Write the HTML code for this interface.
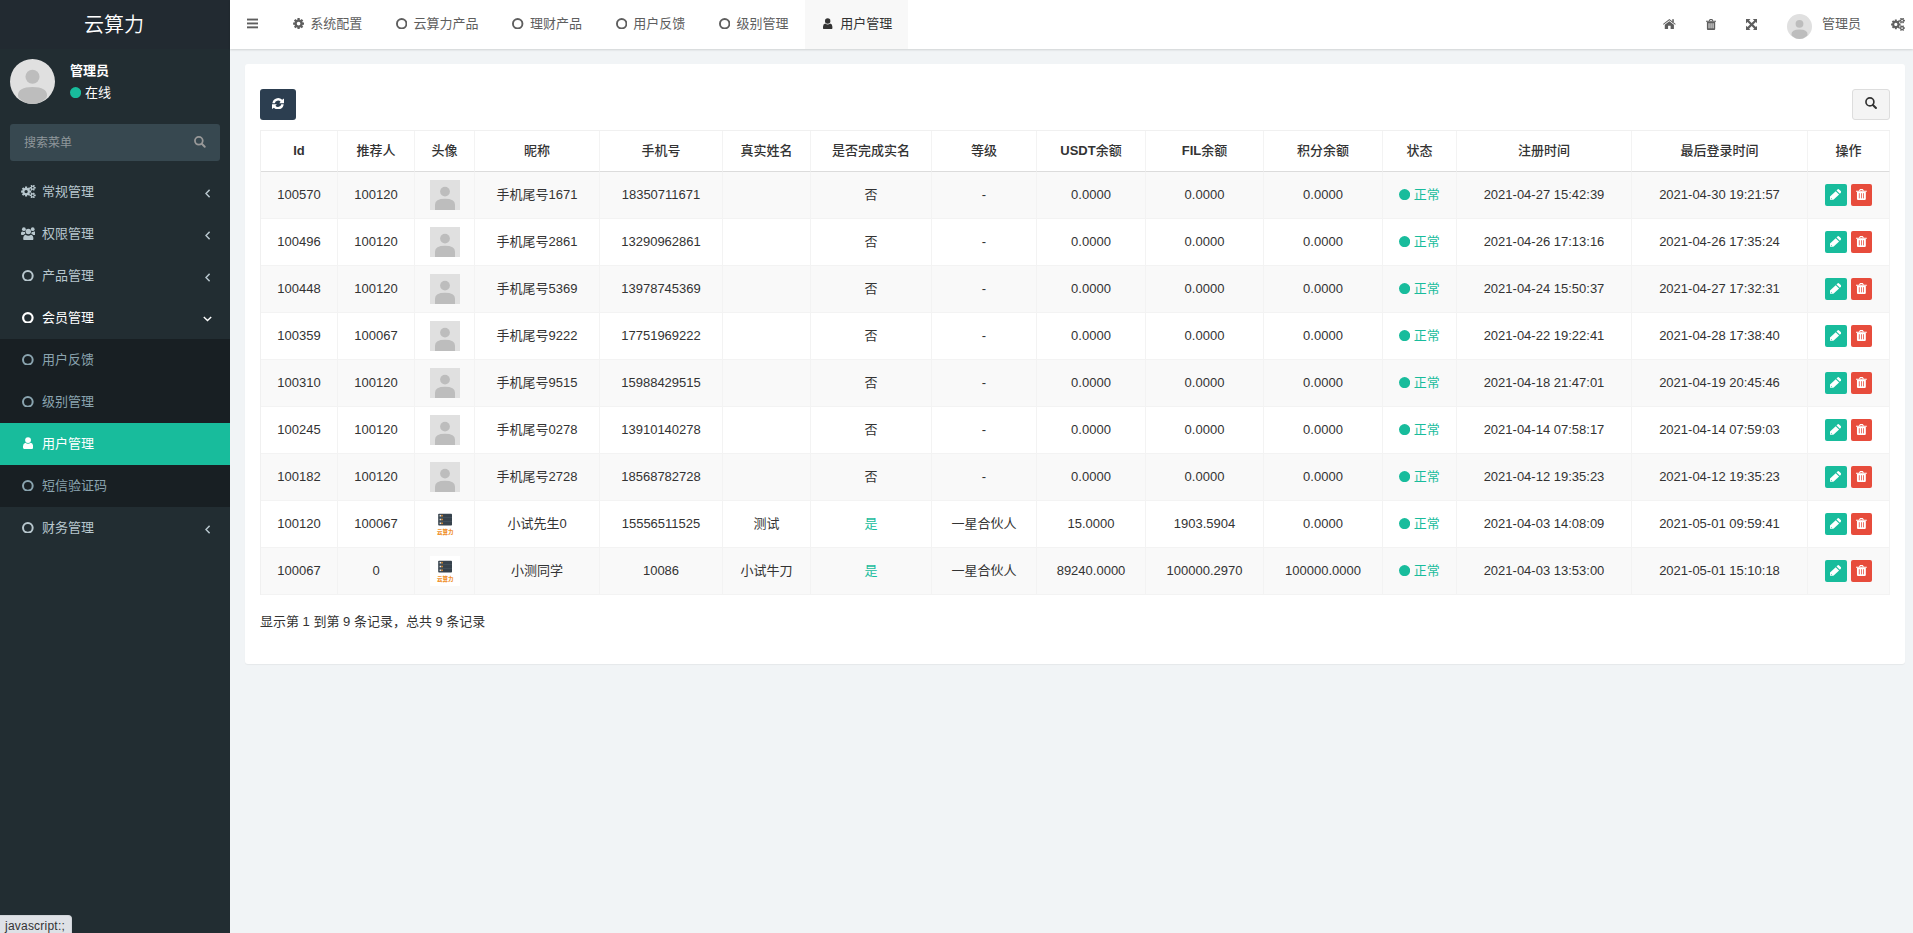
<!DOCTYPE html>
<html lang="zh-CN"><head><meta charset="utf-8"><title>云算力</title>
<style>
*{box-sizing:border-box}
html,body{margin:0;padding:0}
body{width:1913px;height:933px;overflow:hidden;position:relative;background:#f1f4f6;
 font-family:"Liberation Sans","Noto Sans CJK SC",sans-serif;font-size:13px;color:#333;line-height:1.42857}
svg{vertical-align:top}
.abs{position:absolute;display:block}
a{display:block;text-decoration:none}
button{margin:0;padding:0;border:0;font:inherit;display:block}
.mi .i,.mi .t,.tab .i,.tab .t{display:block}
/* sidebar */
#side{position:absolute;left:0;top:0;width:230px;height:933px;background:#222d32}
#logo{position:absolute;left:0;top:0;width:230px;height:49px;background:#222a31;color:#fff;text-align:center;
 font-size:20px;line-height:51px;font-weight:350;text-indent:-1.8px;overflow:hidden;font-family:"Liberation Sans","Noto Sans CJK SC",sans-serif}
#uname{position:absolute;left:70px;top:60.5px;color:#fff;font-weight:bold;font-size:13px;line-height:20px;white-space:nowrap}
#ustat{position:absolute;left:85px;top:82.7px;color:#fff;font-size:13px;line-height:20px;white-space:nowrap}
#sform{position:absolute;left:10px;top:124px;width:210px;height:37px;background:#374850;border-radius:3px}
#sform span{position:absolute;left:14px;top:10px;font-size:12px;line-height:18px;color:#8f979b}
.mi{position:absolute;left:0;width:230px;height:42px;color:#b8c7ce;font-size:13px}
.mi .t{position:absolute;left:42px;top:11px;line-height:20px;white-space:nowrap}
.mi .i{position:absolute}
.mi.sub{color:#8aa4af}
.mi.act{background:#18bc9c;color:#fff}
.mi.open{color:#fff}
#submenu{position:absolute;left:0;top:338.8px;width:230px;height:168px;background:#181f23}
/* header */
#hdr{position:absolute;left:230px;top:0;width:1683px;height:49px;background:#fff;box-shadow:0 1px 2px rgba(0,0,0,.14)}
.tab{position:absolute;top:0;height:49px;color:#555;font-size:13px;line-height:20px;white-space:nowrap}
.tab .t{position:absolute;top:13.5px}
.tab .i{position:absolute}
/* panel */
#panel{position:absolute;left:245px;top:64px;width:1660px;height:600px;background:#fff;border-radius:3px;box-shadow:0 1px 1px rgba(0,0,0,.05)}
#btnr{position:absolute;left:260px;top:89px;width:36px;height:31px;background:#2c3e50;border-radius:3px}
#btns{position:absolute;left:1852px;top:89px;width:38px;height:31px;background:#f4f4f4;border:1px solid #ddd;border-radius:3px}
table{position:absolute;left:260px;top:130px;width:1630px;border-collapse:separate;border-spacing:0;table-layout:fixed;
 border-top:1px solid #f0f0f0;border-left:1px solid #f0f0f0}
th,td{padding:0;text-align:center;vertical-align:middle;border-right:1px solid #f3f3f3;border-bottom:1px solid #f3f3f3;white-space:nowrap;overflow:hidden;font-size:13px}
th{height:41px;border-bottom:1px solid #dcdcdc;font-weight:500;color:#333}
th b{font-weight:700}
td{height:47px;color:#333}
tr.odd td{background:#f9f9f9}
td .av{display:inline-block;width:30px;height:30px;vertical-align:middle}
.yes{color:#18bc9c}
.st{color:#18bc9c}
.st svg{vertical-align:-1px;margin-right:3.3px}
a.bx{display:inline-block;height:22px;border-radius:2px;vertical-align:middle;position:relative}
.bx svg{position:absolute}
#foot{position:absolute;left:260px;top:611.6px;line-height:20px;font-size:13px;color:#333;white-space:nowrap}
#sbar{position:absolute;left:0;top:915px;width:72px;height:18px;background:#dee1e6;border-top-right-radius:4px;
 font-size:12px;line-height:20px;color:#333;padding-left:5px;border-top:1px solid #d0d4d9;border-right:1px solid #d0d4d9;letter-spacing:.22px;white-space:nowrap}
</style></head>
<body>
<aside id="side">
<a id="logo">云算力</a>
<span class="abs" style="left:10px;top:59px;"><svg width="45" height="45" viewBox="0 0 30 30" preserveAspectRatio="none" style="display:block"><circle cx="15" cy="15" r="15" fill="#e0e0e0"/><circle cx="15" cy="11.8" r="4.7" fill="#bdbdbd"/><path fill="#bdbdbd" d="M5.3 24.3 Q5.3 18.6 15 18.6 Q24.7 18.6 24.7 24.3 Q24.7 26 23 27 Q19.5 30 15 30 Q10.5 30 7 27 Q5.3 26 5.3 24.3 Z"/></svg></span>
<div id="uname">管理员</div>
<span class="abs" style="left:70px;top:87px;"><svg width="11.2" height="11.2" viewBox="0 0 11.2 11.2" preserveAspectRatio="none"><circle cx="5.6" cy="5.6" r="5.6" fill="#18bc9c"/></svg></span><div id="ustat">在线</div>
<div id="sform"><span>搜索菜单</span><span class="abs" style="left:184.4px;top:12.2px;"><svg width="11.8" height="11.8" viewBox="0 0 100 100" preserveAspectRatio="none"><circle cx="41" cy="41" r="33" fill="none" stroke="#999" stroke-width="15"/><path d="M66 66 L91 91" stroke="#999" stroke-width="16" stroke-linecap="round"/></svg></span></div>
<div id="submenu"></div>
<nav>
<a class="mi " style="top:170.8px"><span class="i" style="left:20.6px;top:14.1px"><svg width="15" height="13.2" viewBox="0 0 150 132" preserveAspectRatio="none"><path fill-rule="evenodd" fill="#b8c7ce" d="M88.62 55.71 L100.94 55.66 L100.94 76.34 L88.62 76.29 L84.88 85.32 L93.63 94.00 L79.00 108.63 L70.32 99.88 L61.29 103.62 L61.34 115.94 L40.66 115.94 L40.71 103.62 L31.68 99.88 L23.00 108.63 L8.37 94.00 L17.12 85.32 L13.38 76.29 L1.06 76.34 L1.06 55.66 L13.38 55.71 L17.12 46.68 L8.37 38.00 L23.00 23.37 L31.68 32.12 L40.71 28.38 L40.66 16.06 L61.34 16.06 L61.29 28.38 L70.32 32.12 L79.00 23.37 L93.63 38.00 L84.88 46.68 Z M34.00 66.00 a17.00 17.00 0 1 0 34.00 0 a17.00 17.00 0 1 0 -34.00 0 Z M136.76 19.89 L146.94 18.98 L146.94 35.02 L136.76 34.11 L133.04 40.55 L138.92 48.92 L125.02 56.94 L120.72 47.67 L113.28 47.67 L108.98 56.94 L95.08 48.92 L100.96 40.55 L97.24 34.11 L87.06 35.02 L87.06 18.98 L97.24 19.89 L100.96 13.45 L95.08 5.08 L108.98 -2.94 L113.28 6.33 L120.72 6.33 L125.02 -2.94 L138.92 5.08 L133.04 13.45 Z M108.00 27.00 a9.00 9.00 0 1 0 18.00 0 a9.00 9.00 0 1 0 -18.00 0 Z M136.76 96.89 L146.94 95.98 L146.94 112.02 L136.76 111.11 L133.04 117.55 L138.92 125.92 L125.02 133.94 L120.72 124.67 L113.28 124.67 L108.98 133.94 L95.08 125.92 L100.96 117.55 L97.24 111.11 L87.06 112.02 L87.06 95.98 L97.24 96.89 L100.96 90.45 L95.08 82.08 L108.98 74.06 L113.28 83.33 L120.72 83.33 L125.02 74.06 L138.92 82.08 L133.04 90.45 Z M108.00 104.00 a9.00 9.00 0 1 0 18.00 0 a9.00 9.00 0 1 0 -18.00 0 Z"/></svg></span><span class="t">常规管理</span><span class="i" style="left:204.9px;top:18.2px"><svg width="5.5" height="9" viewBox="0 0 55 90" preserveAspectRatio="none"><path d="M46 8 L10 45 L46 82" fill="none" stroke="#b8c7ce" stroke-width="14"/></svg></span></a>
<a class="mi " style="top:212.8px"><span class="i" style="left:20.6px;top:14.0px"><svg width="14.6" height="13.2" viewBox="0 0 146 132" preserveAspectRatio="none"><circle cx="73" cy="45" r="27" fill="#b8c7ce"/><path fill="#b8c7ce" d="M34 132 Q22 132 22 118 Q22 84 46 78 Q58 88 73 88 Q88 88 100 78 Q124 84 124 118 Q124 132 112 132 Z"/><circle cx="29" cy="22" r="19" fill="#b8c7ce"/><path fill="#b8c7ce" d="M0 62 Q0 44 14 44 Q26 52 40 47 Q38 60 44 70 Q30 72 24 80 L8 80 Q0 80 0 70 Z"/><circle cx="117" cy="22" r="19" fill="#b8c7ce"/><path fill="#b8c7ce" d="M146 62 Q146 44 132 44 Q120 52 106 47 Q108 60 102 70 Q116 72 122 80 L138 80 Q146 80 146 70 Z"/></svg></span><span class="t">权限管理</span><span class="i" style="left:204.9px;top:18.2px"><svg width="5.5" height="9" viewBox="0 0 55 90" preserveAspectRatio="none"><path d="M46 8 L10 45 L46 82" fill="none" stroke="#b8c7ce" stroke-width="14"/></svg></span></a>
<a class="mi " style="top:254.8px"><span class="i" style="left:22.3px;top:14.8px"><svg width="11.7" height="11.7" viewBox="0 0 11.7 11.7" preserveAspectRatio="none"><circle cx="5.85" cy="5.85" r="4.85" fill="none" stroke="#b8c7ce" stroke-width="2.0"/></svg></span><span class="t">产品管理</span><span class="i" style="left:204.9px;top:18.2px"><svg width="5.5" height="9" viewBox="0 0 55 90" preserveAspectRatio="none"><path d="M46 8 L10 45 L46 82" fill="none" stroke="#b8c7ce" stroke-width="14"/></svg></span></a>
<a class="mi open" style="top:296.8px"><span class="i" style="left:22.3px;top:14.8px"><svg width="11.7" height="11.7" viewBox="0 0 11.7 11.7" preserveAspectRatio="none"><circle cx="5.85" cy="5.85" r="4.75" fill="none" stroke="#fff" stroke-width="2.2"/></svg></span><span class="t">会员管理</span><span class="i" style="left:203.4px;top:19.7px"><svg width="9" height="5.5" viewBox="0 0 90 55" preserveAspectRatio="none"><path d="M8 9 L45 45 L82 9" fill="none" stroke="#fff" stroke-width="14"/></svg></span></a>
<a class="mi sub" style="top:338.8px"><span class="i" style="left:22.3px;top:14.8px"><svg width="11.7" height="11.7" viewBox="0 0 11.7 11.7" preserveAspectRatio="none"><circle cx="5.85" cy="5.85" r="4.85" fill="none" stroke="#8aa4af" stroke-width="2.0"/></svg></span><span class="t">用户反馈</span></a>
<a class="mi sub" style="top:380.8px"><span class="i" style="left:22.3px;top:14.8px"><svg width="11.7" height="11.7" viewBox="0 0 11.7 11.7" preserveAspectRatio="none"><circle cx="5.85" cy="5.85" r="4.85" fill="none" stroke="#8aa4af" stroke-width="2.0"/></svg></span><span class="t">级别管理</span></a>
<a class="mi sub act" style="top:422.8px"><span class="i" style="left:23.0px;top:14.5px"><svg width="10.1" height="11.9" viewBox="0 0 100 118" preserveAspectRatio="none"><circle cx="50" cy="31" r="29" fill="#fff"/><path fill="#fff" d="M12 118 Q0 118 0 104 L0 92 Q0 62 24 57 Q36 68 50 68 Q64 68 76 57 Q100 62 100 92 L100 104 Q100 118 88 118 Z"/></svg></span><span class="t">用户管理</span></a>
<a class="mi sub" style="top:464.8px"><span class="i" style="left:22.3px;top:14.8px"><svg width="11.7" height="11.7" viewBox="0 0 11.7 11.7" preserveAspectRatio="none"><circle cx="5.85" cy="5.85" r="4.85" fill="none" stroke="#8aa4af" stroke-width="2.0"/></svg></span><span class="t">短信验证码</span></a>
<a class="mi " style="top:506.8px"><span class="i" style="left:22.3px;top:14.8px"><svg width="11.7" height="11.7" viewBox="0 0 11.7 11.7" preserveAspectRatio="none"><circle cx="5.85" cy="5.85" r="4.85" fill="none" stroke="#b8c7ce" stroke-width="2.0"/></svg></span><span class="t">财务管理</span><span class="i" style="left:204.9px;top:18.2px"><svg width="5.5" height="9" viewBox="0 0 55 90" preserveAspectRatio="none"><path d="M46 8 L10 45 L46 82" fill="none" stroke="#b8c7ce" stroke-width="14"/></svg></span></a>
</nav>
</aside>
<header id="hdr">
<span class="abs" style="left:16.9px;top:18.2px;"><svg width="11" height="11" viewBox="0 0 11 11" preserveAspectRatio="none"><rect x="0" y="0.6" width="11" height="1.9" fill="#5e5e5e"/><rect x="0" y="4.5" width="11" height="1.9" fill="#5e5e5e"/><rect x="0" y="8.4" width="11" height="1.9" fill="#5e5e5e"/></svg></span>
<a class="tab" style="left:45px;width:102.5px;color:#5e5e5e"><span class="i" style="left:17.8px;top:17.8px"><svg width="11.2" height="11.2" viewBox="0 0 100 100" preserveAspectRatio="none"><path fill-rule="evenodd" fill="#5e5e5e" d="M86.65 39.97 L98.96 39.86 L98.96 60.14 L86.65 60.03 L83.01 68.83 L91.79 77.45 L77.45 91.79 L68.83 83.01 L60.03 86.65 L60.14 98.96 L39.86 98.96 L39.97 86.65 L31.17 83.01 L22.55 91.79 L8.21 77.45 L16.99 68.83 L13.35 60.03 L1.04 60.14 L1.04 39.86 L13.35 39.97 L16.99 31.17 L8.21 22.55 L22.55 8.21 L31.17 16.99 L39.97 13.35 L39.86 1.04 L60.14 1.04 L60.03 13.35 L68.83 16.99 L77.45 8.21 L91.79 22.55 L83.01 31.17 Z M33.50 50.00 a16.50 16.50 0 1 0 33.00 0 a16.50 16.50 0 1 0 -33.00 0 Z"/></svg></span><span class="t" style="left:35.3px">系统配置</span></a>
<a class="tab" style="left:148.2px;width:115.5px;color:#5e5e5e"><span class="i" style="left:17.6px;top:17.8px"><svg width="11.4" height="11.4" viewBox="0 0 11.4 11.4" preserveAspectRatio="none"><circle cx="5.7" cy="5.7" r="4.75" fill="none" stroke="#5e5e5e" stroke-width="1.9"/></svg></span><span class="t" style="left:35.3px">云算力产品</span></a>
<a class="tab" style="left:264.6px;width:103px;color:#5e5e5e"><span class="i" style="left:17.6px;top:17.8px"><svg width="11.4" height="11.4" viewBox="0 0 11.4 11.4" preserveAspectRatio="none"><circle cx="5.7" cy="5.7" r="4.75" fill="none" stroke="#5e5e5e" stroke-width="1.9"/></svg></span><span class="t" style="left:35.3px">理财产品</span></a>
<a class="tab" style="left:368px;width:103px;color:#5e5e5e"><span class="i" style="left:17.6px;top:17.8px"><svg width="11.4" height="11.4" viewBox="0 0 11.4 11.4" preserveAspectRatio="none"><circle cx="5.7" cy="5.7" r="4.75" fill="none" stroke="#5e5e5e" stroke-width="1.9"/></svg></span><span class="t" style="left:35.3px">用户反馈</span></a>
<a class="tab" style="left:471.3px;width:103px;color:#5e5e5e"><span class="i" style="left:17.6px;top:17.8px"><svg width="11.4" height="11.4" viewBox="0 0 11.4 11.4" preserveAspectRatio="none"><circle cx="5.7" cy="5.7" r="4.75" fill="none" stroke="#5e5e5e" stroke-width="1.9"/></svg></span><span class="t" style="left:35.3px">级别管理</span></a>
<a class="tab" style="left:575px;width:103px;background:#f8f8f8;color:#333"><span class="i" style="left:18.4px;top:17.8px"><svg width="9.4" height="11.3" viewBox="0 0 100 118" preserveAspectRatio="none"><circle cx="50" cy="31" r="29" fill="#333"/><path fill="#333" d="M12 118 Q0 118 0 104 L0 92 Q0 62 24 57 Q36 68 50 68 Q64 68 76 57 Q100 62 100 92 L100 104 Q100 118 88 118 Z"/></svg></span><span class="t" style="left:35.3px">用户管理</span></a>
<span class="abs" style="left:1433px;top:18.9px;"><svg width="12.7" height="10.1" viewBox="0 0 100 100" preserveAspectRatio="none"><path fill="#5e5e5e" d="M50 0 L100 50 L96 56 L50 12 L4 56 L0 50 Z"/><path fill="#5e5e5e" d="M50 22 L86 57 L86 96 Q86 100 82 100 L60 100 L60 68 L40 68 L40 100 L18 100 Q14 100 14 96 L14 57 Z"/><rect x="73" y="2" width="12" height="30" fill="#5e5e5e"/></svg></span>
<span class="abs" style="left:1475.9px;top:18.9px;"><svg width="10.1" height="11.1" viewBox="0 0 100 100" preserveAspectRatio="none"><path fill="#5e5e5e" d="M0 16 L28 16 L35 3 Q36 0 40 0 L60 0 Q64 0 65 3 L72 16 L100 16 L100 25 L0 25 Z"/><path fill="#5e5e5e" d="M9 25 L91 25 L91 88 Q91 100 79 100 L21 100 Q9 100 9 88 Z"/><rect x="25.5" y="38" width="9" height="46" fill="#fff"/><rect x="45.5" y="38" width="9" height="46" fill="#fff"/><rect x="65.5" y="38" width="9" height="46" fill="#fff"/><path fill="#fff" d="M38 16 L42 8 L58 8 L62 16 Z"/></svg></span>
<span class="abs" style="left:1515.9px;top:18.9px;"><svg width="11.3" height="11.1" viewBox="0 0 100 100" preserveAspectRatio="none"><path fill="#5e5e5e" d="M0 0 L40 0 L27 13 L50 36 L73 13 L60 0 L100 0 L100 40 L87 27 L64 50 L87 73 L100 60 L100 100 L60 100 L73 87 L50 64 L27 87 L40 100 L0 100 L0 60 L13 73 L36 50 L13 27 L0 40 Z"/></svg></span>
<span class="abs" style="left:1557px;top:14px;"><svg width="25" height="25" viewBox="0 0 30 30" preserveAspectRatio="none" style="display:block"><circle cx="15" cy="15" r="15" fill="#e0e0e0"/><circle cx="15" cy="11.8" r="4.7" fill="#bdbdbd"/><path fill="#bdbdbd" d="M5.3 24.3 Q5.3 18.6 15 18.6 Q24.7 18.6 24.7 24.3 Q24.7 26 23 27 Q19.5 30 15 30 Q10.5 30 7 27 Q5.3 26 5.3 24.3 Z"/></svg></span>
<div class="abs" style="left:1592px;top:14px;color:#5e5e5e;line-height:20px;white-space:nowrap">管理员</div>
<span class="abs" style="left:1661.4px;top:17.9px;"><svg width="14.2" height="12.8" viewBox="0 0 150 132" preserveAspectRatio="none"><path fill-rule="evenodd" fill="#5e5e5e" d="M88.62 55.71 L100.94 55.66 L100.94 76.34 L88.62 76.29 L84.88 85.32 L93.63 94.00 L79.00 108.63 L70.32 99.88 L61.29 103.62 L61.34 115.94 L40.66 115.94 L40.71 103.62 L31.68 99.88 L23.00 108.63 L8.37 94.00 L17.12 85.32 L13.38 76.29 L1.06 76.34 L1.06 55.66 L13.38 55.71 L17.12 46.68 L8.37 38.00 L23.00 23.37 L31.68 32.12 L40.71 28.38 L40.66 16.06 L61.34 16.06 L61.29 28.38 L70.32 32.12 L79.00 23.37 L93.63 38.00 L84.88 46.68 Z M34.00 66.00 a17.00 17.00 0 1 0 34.00 0 a17.00 17.00 0 1 0 -34.00 0 Z M136.76 19.89 L146.94 18.98 L146.94 35.02 L136.76 34.11 L133.04 40.55 L138.92 48.92 L125.02 56.94 L120.72 47.67 L113.28 47.67 L108.98 56.94 L95.08 48.92 L100.96 40.55 L97.24 34.11 L87.06 35.02 L87.06 18.98 L97.24 19.89 L100.96 13.45 L95.08 5.08 L108.98 -2.94 L113.28 6.33 L120.72 6.33 L125.02 -2.94 L138.92 5.08 L133.04 13.45 Z M108.00 27.00 a9.00 9.00 0 1 0 18.00 0 a9.00 9.00 0 1 0 -18.00 0 Z M136.76 96.89 L146.94 95.98 L146.94 112.02 L136.76 111.11 L133.04 117.55 L138.92 125.92 L125.02 133.94 L120.72 124.67 L113.28 124.67 L108.98 133.94 L95.08 125.92 L100.96 117.55 L97.24 111.11 L87.06 112.02 L87.06 95.98 L97.24 96.89 L100.96 90.45 L95.08 82.08 L108.98 74.06 L113.28 83.33 L120.72 83.33 L125.02 74.06 L138.92 82.08 L133.04 90.45 Z M108.00 104.00 a9.00 9.00 0 1 0 18.00 0 a9.00 9.00 0 1 0 -18.00 0 Z"/></svg></span>
</header>
<main>
<div id="panel"></div>
<button id="btnr" type="button"><span class="abs" style="left:12.1px;top:8.7px;"><svg width="12.1" height="11.5" viewBox="0 0 100 95" preserveAspectRatio="none"><path fill="#fff" d="M3.3 43 A47 47 0 0 1 84 15 L100 4 L100 43 L60 43 L71 32 A27 27 0 0 0 23.5 43 Z"/><path fill="#fff" d="M3.3 43 A47 47 0 0 1 84 15 L100 4 L100 43 L60 43 L71 32 A27 27 0 0 0 23.5 43 Z" transform="rotate(180 50 47.5)"/></svg></span></button>
<button id="btns" type="button"><span class="abs" style="left:12.3px;top:7.3px;"><svg width="12" height="12" viewBox="0 0 100 100" preserveAspectRatio="none"><circle cx="41" cy="41" r="33" fill="none" stroke="#333" stroke-width="14"/><path d="M66 66 L91 91" stroke="#333" stroke-width="17" stroke-linecap="round"/></svg></span></button>
<table><colgroup><col style="width:77px"><col style="width:77px"><col style="width:60px"><col style="width:125px"><col style="width:123px"><col style="width:88px"><col style="width:121px"><col style="width:105px"><col style="width:109px"><col style="width:118px"><col style="width:119px"><col style="width:74px"><col style="width:175px"><col style="width:176px"><col style="width:82px"></colgroup>
<thead><tr><th><b>Id</b></th><th>推荐人</th><th>头像</th><th>昵称</th><th>手机号</th><th>真实姓名</th><th>是否完成实名</th><th>等级</th><th><b>USDT</b>余额</th><th><b>FIL</b>余额</th><th>积分余额</th><th>状态</th><th>注册时间</th><th>最后登录时间</th><th>操作</th></tr></thead>
<tbody>
<tr class="odd"><td>100570</td><td>100120</td><td><span class="av"><svg width="30" height="30" viewBox="0 0 30 30" preserveAspectRatio="none" style="display:block;"><rect width="30" height="30" fill="#e0e0e0"/><circle cx="15" cy="11.6" r="4.9" fill="#bdbdbd"/><path fill="#bdbdbd" d="M5 30 L5 24.6 Q5 18.8 15 18.8 Q25 18.8 25 24.6 L25 30 Z"/></svg></span></td><td>手机尾号1671</td><td>18350711671</td><td></td><td>否</td><td>-</td><td>0.0000</td><td>0.0000</td><td>0.0000</td><td><span class="st"><svg width="11.2" height="11.2" viewBox="0 0 11.2 11.2" preserveAspectRatio="none"><circle cx="5.6" cy="5.6" r="5.6" fill="#18bc9c"/></svg>正常</span></td><td>2021-04-27 15:42:39</td><td>2021-04-30 19:21:57</td><td><a class="bx" style="width:22px;background:#18bc9c"><span class="abs" style="left:5.1px;top:5.4px;"><svg width="11.4" height="10.8" viewBox="0 0 100 100" preserveAspectRatio="none"><path fill="#fff" d="M0 100 L0 70 L50 20 L80 50 L30 100 Z"/><path fill="#18bc9c" d="M8 92 L8 82 L18 92 Z"/><path fill="#fff" d="M57 13 L68 2 Q72 -2 77 2 L98 23 Q102 28 98 32 L87 43 Z"/></svg></span></a><a class="bx" style="width:21px;background:#e74c3c;margin-left:4px"><span class="abs" style="left:5.1px;top:5.0px;"><svg width="10.8" height="11.1" viewBox="0 0 100 100" preserveAspectRatio="none"><path fill="#fff" d="M0 16 L28 16 L35 3 Q36 0 40 0 L60 0 Q64 0 65 3 L72 16 L100 16 L100 25 L0 25 Z"/><path fill="#fff" d="M9 25 L91 25 L91 88 Q91 100 79 100 L21 100 Q9 100 9 88 Z"/><rect x="26.5" y="38" width="7" height="46" fill="#e74c3c"/><rect x="46.5" y="38" width="7" height="46" fill="#e74c3c"/><rect x="66.5" y="38" width="7" height="46" fill="#e74c3c"/><path fill="#e74c3c" d="M38 16 L42 8 L58 8 L62 16 Z"/></svg></span></a></td></tr>
<tr class="even"><td>100496</td><td>100120</td><td><span class="av"><svg width="30" height="30" viewBox="0 0 30 30" preserveAspectRatio="none" style="display:block;"><rect width="30" height="30" fill="#e0e0e0"/><circle cx="15" cy="11.6" r="4.9" fill="#bdbdbd"/><path fill="#bdbdbd" d="M5 30 L5 24.6 Q5 18.8 15 18.8 Q25 18.8 25 24.6 L25 30 Z"/></svg></span></td><td>手机尾号2861</td><td>13290962861</td><td></td><td>否</td><td>-</td><td>0.0000</td><td>0.0000</td><td>0.0000</td><td><span class="st"><svg width="11.2" height="11.2" viewBox="0 0 11.2 11.2" preserveAspectRatio="none"><circle cx="5.6" cy="5.6" r="5.6" fill="#18bc9c"/></svg>正常</span></td><td>2021-04-26 17:13:16</td><td>2021-04-26 17:35:24</td><td><a class="bx" style="width:22px;background:#18bc9c"><span class="abs" style="left:5.1px;top:5.4px;"><svg width="11.4" height="10.8" viewBox="0 0 100 100" preserveAspectRatio="none"><path fill="#fff" d="M0 100 L0 70 L50 20 L80 50 L30 100 Z"/><path fill="#18bc9c" d="M8 92 L8 82 L18 92 Z"/><path fill="#fff" d="M57 13 L68 2 Q72 -2 77 2 L98 23 Q102 28 98 32 L87 43 Z"/></svg></span></a><a class="bx" style="width:21px;background:#e74c3c;margin-left:4px"><span class="abs" style="left:5.1px;top:5.0px;"><svg width="10.8" height="11.1" viewBox="0 0 100 100" preserveAspectRatio="none"><path fill="#fff" d="M0 16 L28 16 L35 3 Q36 0 40 0 L60 0 Q64 0 65 3 L72 16 L100 16 L100 25 L0 25 Z"/><path fill="#fff" d="M9 25 L91 25 L91 88 Q91 100 79 100 L21 100 Q9 100 9 88 Z"/><rect x="26.5" y="38" width="7" height="46" fill="#e74c3c"/><rect x="46.5" y="38" width="7" height="46" fill="#e74c3c"/><rect x="66.5" y="38" width="7" height="46" fill="#e74c3c"/><path fill="#e74c3c" d="M38 16 L42 8 L58 8 L62 16 Z"/></svg></span></a></td></tr>
<tr class="odd"><td>100448</td><td>100120</td><td><span class="av"><svg width="30" height="30" viewBox="0 0 30 30" preserveAspectRatio="none" style="display:block;"><rect width="30" height="30" fill="#e0e0e0"/><circle cx="15" cy="11.6" r="4.9" fill="#bdbdbd"/><path fill="#bdbdbd" d="M5 30 L5 24.6 Q5 18.8 15 18.8 Q25 18.8 25 24.6 L25 30 Z"/></svg></span></td><td>手机尾号5369</td><td>13978745369</td><td></td><td>否</td><td>-</td><td>0.0000</td><td>0.0000</td><td>0.0000</td><td><span class="st"><svg width="11.2" height="11.2" viewBox="0 0 11.2 11.2" preserveAspectRatio="none"><circle cx="5.6" cy="5.6" r="5.6" fill="#18bc9c"/></svg>正常</span></td><td>2021-04-24 15:50:37</td><td>2021-04-27 17:32:31</td><td><a class="bx" style="width:22px;background:#18bc9c"><span class="abs" style="left:5.1px;top:5.4px;"><svg width="11.4" height="10.8" viewBox="0 0 100 100" preserveAspectRatio="none"><path fill="#fff" d="M0 100 L0 70 L50 20 L80 50 L30 100 Z"/><path fill="#18bc9c" d="M8 92 L8 82 L18 92 Z"/><path fill="#fff" d="M57 13 L68 2 Q72 -2 77 2 L98 23 Q102 28 98 32 L87 43 Z"/></svg></span></a><a class="bx" style="width:21px;background:#e74c3c;margin-left:4px"><span class="abs" style="left:5.1px;top:5.0px;"><svg width="10.8" height="11.1" viewBox="0 0 100 100" preserveAspectRatio="none"><path fill="#fff" d="M0 16 L28 16 L35 3 Q36 0 40 0 L60 0 Q64 0 65 3 L72 16 L100 16 L100 25 L0 25 Z"/><path fill="#fff" d="M9 25 L91 25 L91 88 Q91 100 79 100 L21 100 Q9 100 9 88 Z"/><rect x="26.5" y="38" width="7" height="46" fill="#e74c3c"/><rect x="46.5" y="38" width="7" height="46" fill="#e74c3c"/><rect x="66.5" y="38" width="7" height="46" fill="#e74c3c"/><path fill="#e74c3c" d="M38 16 L42 8 L58 8 L62 16 Z"/></svg></span></a></td></tr>
<tr class="even"><td>100359</td><td>100067</td><td><span class="av"><svg width="30" height="30" viewBox="0 0 30 30" preserveAspectRatio="none" style="display:block;"><rect width="30" height="30" fill="#e0e0e0"/><circle cx="15" cy="11.6" r="4.9" fill="#bdbdbd"/><path fill="#bdbdbd" d="M5 30 L5 24.6 Q5 18.8 15 18.8 Q25 18.8 25 24.6 L25 30 Z"/></svg></span></td><td>手机尾号9222</td><td>17751969222</td><td></td><td>否</td><td>-</td><td>0.0000</td><td>0.0000</td><td>0.0000</td><td><span class="st"><svg width="11.2" height="11.2" viewBox="0 0 11.2 11.2" preserveAspectRatio="none"><circle cx="5.6" cy="5.6" r="5.6" fill="#18bc9c"/></svg>正常</span></td><td>2021-04-22 19:22:41</td><td>2021-04-28 17:38:40</td><td><a class="bx" style="width:22px;background:#18bc9c"><span class="abs" style="left:5.1px;top:5.4px;"><svg width="11.4" height="10.8" viewBox="0 0 100 100" preserveAspectRatio="none"><path fill="#fff" d="M0 100 L0 70 L50 20 L80 50 L30 100 Z"/><path fill="#18bc9c" d="M8 92 L8 82 L18 92 Z"/><path fill="#fff" d="M57 13 L68 2 Q72 -2 77 2 L98 23 Q102 28 98 32 L87 43 Z"/></svg></span></a><a class="bx" style="width:21px;background:#e74c3c;margin-left:4px"><span class="abs" style="left:5.1px;top:5.0px;"><svg width="10.8" height="11.1" viewBox="0 0 100 100" preserveAspectRatio="none"><path fill="#fff" d="M0 16 L28 16 L35 3 Q36 0 40 0 L60 0 Q64 0 65 3 L72 16 L100 16 L100 25 L0 25 Z"/><path fill="#fff" d="M9 25 L91 25 L91 88 Q91 100 79 100 L21 100 Q9 100 9 88 Z"/><rect x="26.5" y="38" width="7" height="46" fill="#e74c3c"/><rect x="46.5" y="38" width="7" height="46" fill="#e74c3c"/><rect x="66.5" y="38" width="7" height="46" fill="#e74c3c"/><path fill="#e74c3c" d="M38 16 L42 8 L58 8 L62 16 Z"/></svg></span></a></td></tr>
<tr class="odd"><td>100310</td><td>100120</td><td><span class="av"><svg width="30" height="30" viewBox="0 0 30 30" preserveAspectRatio="none" style="display:block;"><rect width="30" height="30" fill="#e0e0e0"/><circle cx="15" cy="11.6" r="4.9" fill="#bdbdbd"/><path fill="#bdbdbd" d="M5 30 L5 24.6 Q5 18.8 15 18.8 Q25 18.8 25 24.6 L25 30 Z"/></svg></span></td><td>手机尾号9515</td><td>15988429515</td><td></td><td>否</td><td>-</td><td>0.0000</td><td>0.0000</td><td>0.0000</td><td><span class="st"><svg width="11.2" height="11.2" viewBox="0 0 11.2 11.2" preserveAspectRatio="none"><circle cx="5.6" cy="5.6" r="5.6" fill="#18bc9c"/></svg>正常</span></td><td>2021-04-18 21:47:01</td><td>2021-04-19 20:45:46</td><td><a class="bx" style="width:22px;background:#18bc9c"><span class="abs" style="left:5.1px;top:5.4px;"><svg width="11.4" height="10.8" viewBox="0 0 100 100" preserveAspectRatio="none"><path fill="#fff" d="M0 100 L0 70 L50 20 L80 50 L30 100 Z"/><path fill="#18bc9c" d="M8 92 L8 82 L18 92 Z"/><path fill="#fff" d="M57 13 L68 2 Q72 -2 77 2 L98 23 Q102 28 98 32 L87 43 Z"/></svg></span></a><a class="bx" style="width:21px;background:#e74c3c;margin-left:4px"><span class="abs" style="left:5.1px;top:5.0px;"><svg width="10.8" height="11.1" viewBox="0 0 100 100" preserveAspectRatio="none"><path fill="#fff" d="M0 16 L28 16 L35 3 Q36 0 40 0 L60 0 Q64 0 65 3 L72 16 L100 16 L100 25 L0 25 Z"/><path fill="#fff" d="M9 25 L91 25 L91 88 Q91 100 79 100 L21 100 Q9 100 9 88 Z"/><rect x="26.5" y="38" width="7" height="46" fill="#e74c3c"/><rect x="46.5" y="38" width="7" height="46" fill="#e74c3c"/><rect x="66.5" y="38" width="7" height="46" fill="#e74c3c"/><path fill="#e74c3c" d="M38 16 L42 8 L58 8 L62 16 Z"/></svg></span></a></td></tr>
<tr class="even"><td>100245</td><td>100120</td><td><span class="av"><svg width="30" height="30" viewBox="0 0 30 30" preserveAspectRatio="none" style="display:block;"><rect width="30" height="30" fill="#e0e0e0"/><circle cx="15" cy="11.6" r="4.9" fill="#bdbdbd"/><path fill="#bdbdbd" d="M5 30 L5 24.6 Q5 18.8 15 18.8 Q25 18.8 25 24.6 L25 30 Z"/></svg></span></td><td>手机尾号0278</td><td>13910140278</td><td></td><td>否</td><td>-</td><td>0.0000</td><td>0.0000</td><td>0.0000</td><td><span class="st"><svg width="11.2" height="11.2" viewBox="0 0 11.2 11.2" preserveAspectRatio="none"><circle cx="5.6" cy="5.6" r="5.6" fill="#18bc9c"/></svg>正常</span></td><td>2021-04-14 07:58:17</td><td>2021-04-14 07:59:03</td><td><a class="bx" style="width:22px;background:#18bc9c"><span class="abs" style="left:5.1px;top:5.4px;"><svg width="11.4" height="10.8" viewBox="0 0 100 100" preserveAspectRatio="none"><path fill="#fff" d="M0 100 L0 70 L50 20 L80 50 L30 100 Z"/><path fill="#18bc9c" d="M8 92 L8 82 L18 92 Z"/><path fill="#fff" d="M57 13 L68 2 Q72 -2 77 2 L98 23 Q102 28 98 32 L87 43 Z"/></svg></span></a><a class="bx" style="width:21px;background:#e74c3c;margin-left:4px"><span class="abs" style="left:5.1px;top:5.0px;"><svg width="10.8" height="11.1" viewBox="0 0 100 100" preserveAspectRatio="none"><path fill="#fff" d="M0 16 L28 16 L35 3 Q36 0 40 0 L60 0 Q64 0 65 3 L72 16 L100 16 L100 25 L0 25 Z"/><path fill="#fff" d="M9 25 L91 25 L91 88 Q91 100 79 100 L21 100 Q9 100 9 88 Z"/><rect x="26.5" y="38" width="7" height="46" fill="#e74c3c"/><rect x="46.5" y="38" width="7" height="46" fill="#e74c3c"/><rect x="66.5" y="38" width="7" height="46" fill="#e74c3c"/><path fill="#e74c3c" d="M38 16 L42 8 L58 8 L62 16 Z"/></svg></span></a></td></tr>
<tr class="odd"><td>100182</td><td>100120</td><td><span class="av"><svg width="30" height="30" viewBox="0 0 30 30" preserveAspectRatio="none" style="display:block;"><rect width="30" height="30" fill="#e0e0e0"/><circle cx="15" cy="11.6" r="4.9" fill="#bdbdbd"/><path fill="#bdbdbd" d="M5 30 L5 24.6 Q5 18.8 15 18.8 Q25 18.8 25 24.6 L25 30 Z"/></svg></span></td><td>手机尾号2728</td><td>18568782728</td><td></td><td>否</td><td>-</td><td>0.0000</td><td>0.0000</td><td>0.0000</td><td><span class="st"><svg width="11.2" height="11.2" viewBox="0 0 11.2 11.2" preserveAspectRatio="none"><circle cx="5.6" cy="5.6" r="5.6" fill="#18bc9c"/></svg>正常</span></td><td>2021-04-12 19:35:23</td><td>2021-04-12 19:35:23</td><td><a class="bx" style="width:22px;background:#18bc9c"><span class="abs" style="left:5.1px;top:5.4px;"><svg width="11.4" height="10.8" viewBox="0 0 100 100" preserveAspectRatio="none"><path fill="#fff" d="M0 100 L0 70 L50 20 L80 50 L30 100 Z"/><path fill="#18bc9c" d="M8 92 L8 82 L18 92 Z"/><path fill="#fff" d="M57 13 L68 2 Q72 -2 77 2 L98 23 Q102 28 98 32 L87 43 Z"/></svg></span></a><a class="bx" style="width:21px;background:#e74c3c;margin-left:4px"><span class="abs" style="left:5.1px;top:5.0px;"><svg width="10.8" height="11.1" viewBox="0 0 100 100" preserveAspectRatio="none"><path fill="#fff" d="M0 16 L28 16 L35 3 Q36 0 40 0 L60 0 Q64 0 65 3 L72 16 L100 16 L100 25 L0 25 Z"/><path fill="#fff" d="M9 25 L91 25 L91 88 Q91 100 79 100 L21 100 Q9 100 9 88 Z"/><rect x="26.5" y="38" width="7" height="46" fill="#e74c3c"/><rect x="46.5" y="38" width="7" height="46" fill="#e74c3c"/><rect x="66.5" y="38" width="7" height="46" fill="#e74c3c"/><path fill="#e74c3c" d="M38 16 L42 8 L58 8 L62 16 Z"/></svg></span></a></td></tr>
<tr class="even"><td>100120</td><td>100067</td><td><span class="av"><svg width="30" height="30" viewBox="0 0 30 30" preserveAspectRatio="none" style="display:block"><rect width="30" height="30" fill="#fff"/><rect x="8.2" y="4.8" width="13.8" height="11.8" rx="0.8" fill="#36424c"/><rect x="8.2" y="8.4" width="13.8" height="0.5" fill="#4d5a64"/><rect x="8.2" y="12.2" width="13.8" height="0.5" fill="#4d5a64"/><rect x="9.6" y="5.9" width="1.6" height="1.6" fill="#dfe3e6"/><rect x="11.4" y="5.9" width="1.4" height="1.6" fill="#e8912d"/><rect x="9.6" y="9.7" width="1.6" height="1.6" fill="#dfe3e6"/><rect x="11.4" y="9.7" width="1.4" height="1.6" fill="#e8912d"/><rect x="9.6" y="13.5" width="1.6" height="1.6" fill="#dfe3e6"/><rect x="11.4" y="13.5" width="1.4" height="1.6" fill="#e8912d"/><text x="15.3" y="24.8" text-anchor="middle" font-family="Liberation Sans, Noto Sans CJK SC, sans-serif" font-weight="900" font-size="5.5" fill="#f0932f">云算力</text></svg></span></td><td>小试先生0</td><td>15556511525</td><td>测试</td><td><span class="yes">是</span></td><td>一星合伙人</td><td>15.0000</td><td>1903.5904</td><td>0.0000</td><td><span class="st"><svg width="11.2" height="11.2" viewBox="0 0 11.2 11.2" preserveAspectRatio="none"><circle cx="5.6" cy="5.6" r="5.6" fill="#18bc9c"/></svg>正常</span></td><td>2021-04-03 14:08:09</td><td>2021-05-01 09:59:41</td><td><a class="bx" style="width:22px;background:#18bc9c"><span class="abs" style="left:5.1px;top:5.4px;"><svg width="11.4" height="10.8" viewBox="0 0 100 100" preserveAspectRatio="none"><path fill="#fff" d="M0 100 L0 70 L50 20 L80 50 L30 100 Z"/><path fill="#18bc9c" d="M8 92 L8 82 L18 92 Z"/><path fill="#fff" d="M57 13 L68 2 Q72 -2 77 2 L98 23 Q102 28 98 32 L87 43 Z"/></svg></span></a><a class="bx" style="width:21px;background:#e74c3c;margin-left:4px"><span class="abs" style="left:5.1px;top:5.0px;"><svg width="10.8" height="11.1" viewBox="0 0 100 100" preserveAspectRatio="none"><path fill="#fff" d="M0 16 L28 16 L35 3 Q36 0 40 0 L60 0 Q64 0 65 3 L72 16 L100 16 L100 25 L0 25 Z"/><path fill="#fff" d="M9 25 L91 25 L91 88 Q91 100 79 100 L21 100 Q9 100 9 88 Z"/><rect x="26.5" y="38" width="7" height="46" fill="#e74c3c"/><rect x="46.5" y="38" width="7" height="46" fill="#e74c3c"/><rect x="66.5" y="38" width="7" height="46" fill="#e74c3c"/><path fill="#e74c3c" d="M38 16 L42 8 L58 8 L62 16 Z"/></svg></span></a></td></tr>
<tr class="odd"><td>100067</td><td>0</td><td><span class="av"><svg width="30" height="30" viewBox="0 0 30 30" preserveAspectRatio="none" style="display:block"><rect width="30" height="30" fill="#fff"/><rect x="8.2" y="4.8" width="13.8" height="11.8" rx="0.8" fill="#36424c"/><rect x="8.2" y="8.4" width="13.8" height="0.5" fill="#4d5a64"/><rect x="8.2" y="12.2" width="13.8" height="0.5" fill="#4d5a64"/><rect x="9.6" y="5.9" width="1.6" height="1.6" fill="#dfe3e6"/><rect x="11.4" y="5.9" width="1.4" height="1.6" fill="#e8912d"/><rect x="9.6" y="9.7" width="1.6" height="1.6" fill="#dfe3e6"/><rect x="11.4" y="9.7" width="1.4" height="1.6" fill="#e8912d"/><rect x="9.6" y="13.5" width="1.6" height="1.6" fill="#dfe3e6"/><rect x="11.4" y="13.5" width="1.4" height="1.6" fill="#e8912d"/><text x="15.3" y="24.8" text-anchor="middle" font-family="Liberation Sans, Noto Sans CJK SC, sans-serif" font-weight="900" font-size="5.5" fill="#f0932f">云算力</text></svg></span></td><td>小测同学</td><td>10086</td><td>小试牛刀</td><td><span class="yes">是</span></td><td>一星合伙人</td><td>89240.0000</td><td>100000.2970</td><td>100000.0000</td><td><span class="st"><svg width="11.2" height="11.2" viewBox="0 0 11.2 11.2" preserveAspectRatio="none"><circle cx="5.6" cy="5.6" r="5.6" fill="#18bc9c"/></svg>正常</span></td><td>2021-04-03 13:53:00</td><td>2021-05-01 15:10:18</td><td><a class="bx" style="width:22px;background:#18bc9c"><span class="abs" style="left:5.1px;top:5.4px;"><svg width="11.4" height="10.8" viewBox="0 0 100 100" preserveAspectRatio="none"><path fill="#fff" d="M0 100 L0 70 L50 20 L80 50 L30 100 Z"/><path fill="#18bc9c" d="M8 92 L8 82 L18 92 Z"/><path fill="#fff" d="M57 13 L68 2 Q72 -2 77 2 L98 23 Q102 28 98 32 L87 43 Z"/></svg></span></a><a class="bx" style="width:21px;background:#e74c3c;margin-left:4px"><span class="abs" style="left:5.1px;top:5.0px;"><svg width="10.8" height="11.1" viewBox="0 0 100 100" preserveAspectRatio="none"><path fill="#fff" d="M0 16 L28 16 L35 3 Q36 0 40 0 L60 0 Q64 0 65 3 L72 16 L100 16 L100 25 L0 25 Z"/><path fill="#fff" d="M9 25 L91 25 L91 88 Q91 100 79 100 L21 100 Q9 100 9 88 Z"/><rect x="26.5" y="38" width="7" height="46" fill="#e74c3c"/><rect x="46.5" y="38" width="7" height="46" fill="#e74c3c"/><rect x="66.5" y="38" width="7" height="46" fill="#e74c3c"/><path fill="#e74c3c" d="M38 16 L42 8 L58 8 L62 16 Z"/></svg></span></a></td></tr>
</tbody></table>
<div id="foot">显示第 1 到第 9 条记录，总共 9 条记录</div>
</main>
<div id="sbar">javascript:;</div>
</body></html>
